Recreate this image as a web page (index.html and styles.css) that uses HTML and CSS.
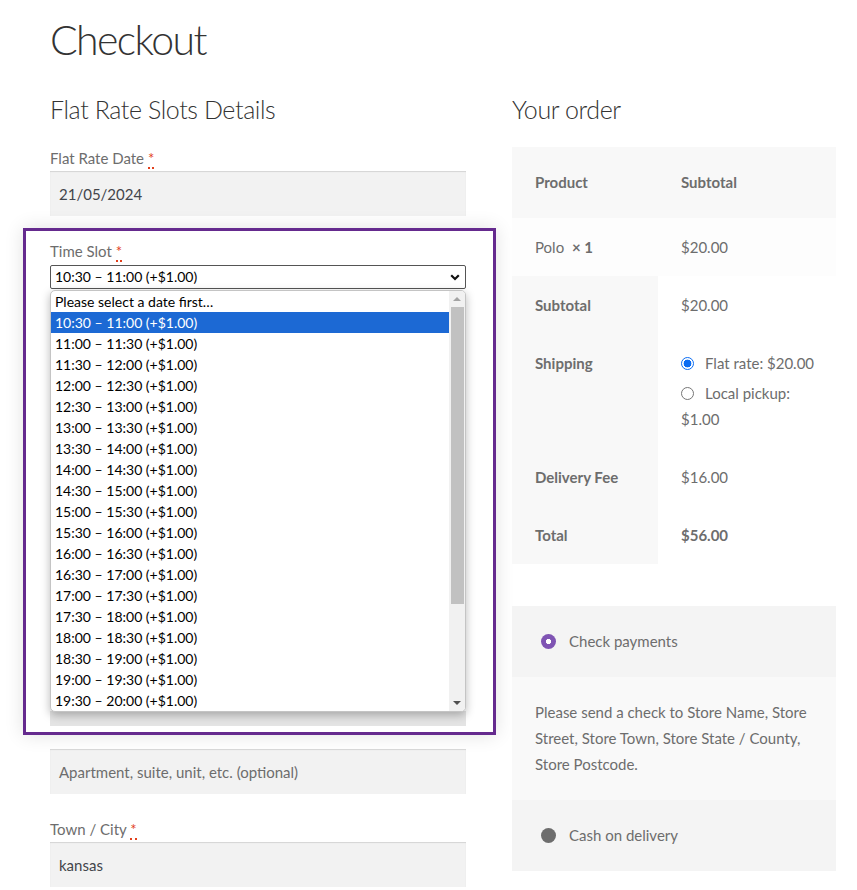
FILE: index.html
```html
<!DOCTYPE html>
<html lang="en">
<head>
<meta charset="utf-8">
<title>Checkout</title>
<link rel="stylesheet" href="styles.css">
</head>
<body>
<div class="page">
  <h1 class="page-title">Checkout</h1>
  <div class="cols">
    <div class="col-left">
      <h3 class="section-title">Flat Rate Slots Details</h3>
      <div class="field">
        <label class="label">Flat Rate Date <abbr class="req">*</abbr></label>
        <div class="input">21/05/2024</div>
      </div>

      <div class="highlight">
        <div class="field slot-field">
          <label class="label">Time Slot <abbr class="req">*</abbr></label>
          <div class="select-wrap">
            <div class="select">
              <span>10:30 – 11:00 (+$1.00)</span>
              <svg class="chev" width="10" height="7" viewBox="0 0 10 7"><polyline points="1.2,1.2 5,5 8.8,1.2" fill="none" stroke="#111" stroke-width="2.2"/></svg>
            </div>
            <div class="popup">
              <ul class="options">
                <li>Please select a date first…</li>
                <li class="sel">10:30 – 11:00 (+$1.00)</li>
                <li>11:00 – 11:30 (+$1.00)</li>
                <li>11:30 – 12:00 (+$1.00)</li>
                <li>12:00 – 12:30 (+$1.00)</li>
                <li>12:30 – 13:00 (+$1.00)</li>
                <li>13:00 – 13:30 (+$1.00)</li>
                <li>13:30 – 14:00 (+$1.00)</li>
                <li>14:00 – 14:30 (+$1.00)</li>
                <li>14:30 – 15:00 (+$1.00)</li>
                <li>15:00 – 15:30 (+$1.00)</li>
                <li>15:30 – 16:00 (+$1.00)</li>
                <li>16:00 – 16:30 (+$1.00)</li>
                <li>16:30 – 17:00 (+$1.00)</li>
                <li>17:00 – 17:30 (+$1.00)</li>
                <li>17:30 – 18:00 (+$1.00)</li>
                <li>18:00 – 18:30 (+$1.00)</li>
                <li>18:30 – 19:00 (+$1.00)</li>
                <li>19:00 – 19:30 (+$1.00)</li>
                <li>19:30 – 20:00 (+$1.00)</li>
              </ul>
              <div class="scrollbar">
                <span class="arrow up"></span>
                <span class="thumb"></span>
                <span class="arrow down"></span>
              </div>
            </div>
          </div>
        </div>
        <div class="behind">
          <div class="input-peek"></div>
        </div>
      </div>

      <div class="input placeholder apt">Apartment, suite, unit, etc. (optional)</div>

      <div class="field town">
        <label class="label">Town / City <abbr class="req">*</abbr></label>
        <div class="input">kansas</div>
      </div>
    </div>

    <div class="col-right">
      <h3 class="section-title">Your order</h3>
      <table class="order">
        <colgroup><col class="col-a"><col class="col-b"></colgroup>
        <thead>
          <tr><th>Product</th><th>Subtotal</th></tr>
        </thead>
        <tbody>
          <tr><td>Polo <strong class="qty">× 1</strong></td><td>$20.00</td></tr>
        </tbody>
        <tfoot>
          <tr><th>Subtotal</th><td>$20.00</td></tr>
          <tr>
            <th>Shipping</th>
            <td>
              <ul class="ship">
                <li><span class="radio on"></span>Flat rate: $20.00</li>
                <li><span class="radio"></span>Local pickup: $1.00</li>
              </ul>
            </td>
          </tr>
          <tr><th>Delivery Fee</th><td>$16.00</td></tr>
          <tr><th>Total</th><td><strong>$56.00</strong></td></tr>
        </tfoot>
      </table>

      <div class="payment">
        <div class="method"><span class="dot active"></span>Check payments</div>
        <div class="desc">Please send a check to Store Name, Store Street, Store Town, Store State / County, Store Postcode.</div>
        <div class="method"><span class="dot"></span>Cash on delivery</div>
      </div>
    </div>
  </div>
</div>
</body>
</html>
```

FILE: styles.css
```css
* { box-sizing: border-box; }
html, body { margin: 0; padding: 0; background: #fff; }
body {
  font-family: Lato, "Liberation Sans", sans-serif;
  font-size: 15px;
  line-height: 26px;
  color: #6d6d6d;
  overflow: hidden;
}
.page {
  padding: 15px 0 0 50px;
  width: 836px;
}
.page-title {
  margin: 0;
  font-size: 41px;
  line-height: 50px;
  font-weight: 300;
  color: #333;
  letter-spacing: -1.6px;
}
.cols {
  display: flex;
  gap: 46px;
  margin-top: 27px;
}
.col-left { width: 416px; }
.col-right { width: 324px; }

.section-title {
  margin: 0 0 19px;
  font-size: 25px;
  line-height: 34px;
  font-weight: 300;
  color: #333;
  letter-spacing: -0.4px;
}

.label { display: block; color: #6d6d6d; }
.req {
  color: #e2401c;
  text-decoration: none;
  border-bottom: 2px dotted #e2401c;
  line-height: 1;
}
.field { margin-bottom: 12px; }
.input {
  height: 45px;
  background: #f2f2f2;
  box-shadow: inset 0 1px 1px rgba(0,0,0,.125);
  padding: 0 9px;
  display: flex;
  align-items: center;
  color: #43454b;
}
.placeholder { color: #6d6d6d; }

/* purple annotation box */
.highlight {
  border: 3px solid #652a8e;
  margin: 0 -30px 14px -27px;
  padding: 7px 27px 6px 24px;
  box-shadow: 0 0 18px rgba(0,0,0,.12);
}
.slot-field { margin-bottom: 0; }
.select-wrap { position: relative; margin-top: 1px; }
.select {
  height: 24px;
  border: 1px solid #555;
  border-radius: 2px;
  background: #fff;
  display: flex;
  align-items: center;
  justify-content: space-between;
  padding: 0 5px 0 4px;
  color: #000;
  font-size: 14px;
}
.chev { margin-top: 1px; }

.popup {
  position: absolute;
  top: 25px;
  left: 0;
  width: 416px;
  height: 422px;
  background: #fff;
  border: 1px solid #c4c4c4;
  border-radius: 5px;
  box-shadow: 0 3px 10px rgba(0,0,0,.28);
  display: flex;
  overflow: hidden;
  z-index: 5;
}
.options {
  list-style: none;
  margin: 0;
  padding: 0;
  flex: 1;
}
.options li {
  height: 21px;
  line-height: 21px;
  padding-left: 4px;
  color: #000;
  font-size: 14px;
  white-space: nowrap;
}
.options li.sel { background: #1c69d4; color: #fff; }
.scrollbar {
  width: 16px;
  background: #f1f1f1;
  display: flex;
  flex-direction: column;
  align-items: center;
  padding-top: 6px;
}
.arrow { width: 0; height: 0; border-left: 4px solid transparent; border-right: 4px solid transparent; }
.arrow.up { border-bottom: 4px solid #a3a3a3; }
.arrow.down { border-top: 4px solid #505050; margin-top: auto; margin-bottom: 6px; }
.thumb {
  width: 13px;
  height: 297px;
  background: #c1c1c1;
  margin-top: 6px;
}

.behind { padding-top: 422px; }
.input-peek { height: 15px; background: #e4e4e4; }

.apt { margin-bottom: 22px; }
.town { margin-bottom: 0; }

/* order table */
.order {
  width: 324px;
  table-layout: fixed;
  border-collapse: collapse;
  border-spacing: 0;
  margin: 21px 0 42px;
}
.col-a { width: 146px; }
.col-b { width: 178px; }
.order th, .order td {
  text-align: left;
  vertical-align: top;
  padding: 16px 23px;
  line-height: 26px;
}
.order th { font-weight: 700; background: #f8f8f8; }
.order thead th { padding: 22px 23px 23px; vertical-align: middle; }
.order tbody td { background: #fdfdfd; }
.order tfoot td { background: #fff; }
.qty { margin-left: 4px; }
.ship { list-style: none; margin: 0 -10px 0 0; padding: 0; }
.ship li { margin-bottom: 4px; }
.ship li:last-child { margin-bottom: 0; }
.radio {
  display: inline-block;
  width: 13px;
  height: 13px;
  border-radius: 50%;
  border: 1px solid #767676;
  background: #fff;
  margin: 0 11px 0 0;
  vertical-align: -1px;
}
.radio.on {
  border: 1px solid #0b6cf2;
  background: radial-gradient(circle, #0b6cf2 0 3.6px, #fff 4.2px);
}

/* payment box */
.payment { width: 324px; }
.method {
  background: #f4f4f4;
  padding: 22px 23px 23px;
  display: flex;
  align-items: center;
}
.desc {
  background: #f9f9f9;
  padding: 22px 23px 23px;
}
.dot {
  width: 15px;
  height: 15px;
  border-radius: 50%;
  background: #6d6d6d;
  margin: 0 13px 0 6px;
  flex: none;
}
.dot.active {
  background: radial-gradient(circle, #fff 0 2.3px, #7f54b3 2.9px);
}
```
